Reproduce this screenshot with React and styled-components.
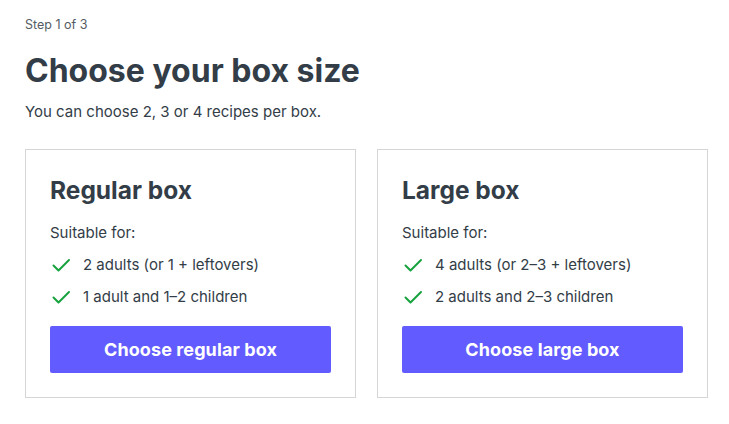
import styled, { createGlobalStyle } from "styled-components";

const GlobalStyle = createGlobalStyle`
  body {
    margin: 0;
    background: #ffffff;
    font-family: "Inter", "Noto Sans", sans-serif;
    color: #333d47;
  }
`;

const Page = styled.div`
  padding: 16px 21px 0 25px;
`;

const Step = styled.div`
  font-size: 12.5px;
  color: #555c63;
  line-height: 18px;
`;

const Title = styled.h1`
  margin: 17px 0 0;
  font-size: 32px;
  font-weight: 700;
  line-height: 40px;
`;

const Subtitle = styled.p`
  margin: 10px 0 0;
  font-size: 15px;
  line-height: 22px;
`;

const Cards = styled.div`
  margin-top: 26px;
  display: grid;
  grid-template-columns: 1fr 1fr;
  gap: 21px;
`;

const Card = styled.div`
  border: 1px solid #d4d6d8;
  padding: 24px;
  display: flex;
  flex-direction: column;
`;

const CardTitle = styled.h2`
  margin: 0;
  font-size: 24.5px;
  font-weight: 700;
  line-height: 32px;
`;

const Suitable = styled.div`
  margin-top: 16px;
  font-size: 15px;
  line-height: 22px;
`;

const List = styled.ul`
  list-style: none;
  margin: 10px 0 0;
  padding: 0;
  display: flex;
  flex-direction: column;
  gap: 10px;
`;

const Item = styled.li`
  display: flex;
  align-items: center;
  gap: 12px;
  font-size: 15px;
  line-height: 22px;
`;

const Check = styled.svg`
  width: 20px;
  height: 20px;
  flex: none;
  margin-left: 1px;
`;

const Button = styled.button`
  margin-top: 18px;
  height: 47px;
  border: none;
  border-radius: 2px;
  background: #625bff;
  color: #ffffff;
  font-family: inherit;
  font-size: 18px;
  font-weight: 700;
  letter-spacing: 0.1px;
  cursor: pointer;
`;

const boxes = [
  {
    title: "Regular box",
    items: ["2 adults (or 1 + leftovers)", "1 adult and 1–2 children"],
    cta: "Choose regular box",
  },
  {
    title: "Large box",
    items: ["4 adults (or 2–3 + leftovers)", "2 adults and 2–3 children"],
    cta: "Choose large box",
  },
];

export default function App() {
  return (
    <>
      <GlobalStyle />
      <Page>
        <Step>Step 1 of 3</Step>
        <Title>Choose your box size</Title>
        <Subtitle>You can choose 2, 3 or 4 recipes per box.</Subtitle>
        <Cards>
          {boxes.map((box) => (
            <Card key={box.title}>
              <CardTitle>{box.title}</CardTitle>
              <Suitable>Suitable for:</Suitable>
              <List>
                {box.items.map((item) => (
                  <Item key={item}>
                    <Check viewBox="0 0 20 20">
                      <path
                        d="M2.5 10.5 L7.5 15.5 L18 5"
                        fill="none"
                        stroke="#18a23f"
                        strokeWidth="2"
                        strokeLinecap="round"
                        strokeLinejoin="round"
                      />
                    </Check>
                    {item}
                  </Item>
                ))}
              </List>
              <Button>{box.cta}</Button>
            </Card>
          ))}
        </Cards>
      </Page>
    </>
  );
}
